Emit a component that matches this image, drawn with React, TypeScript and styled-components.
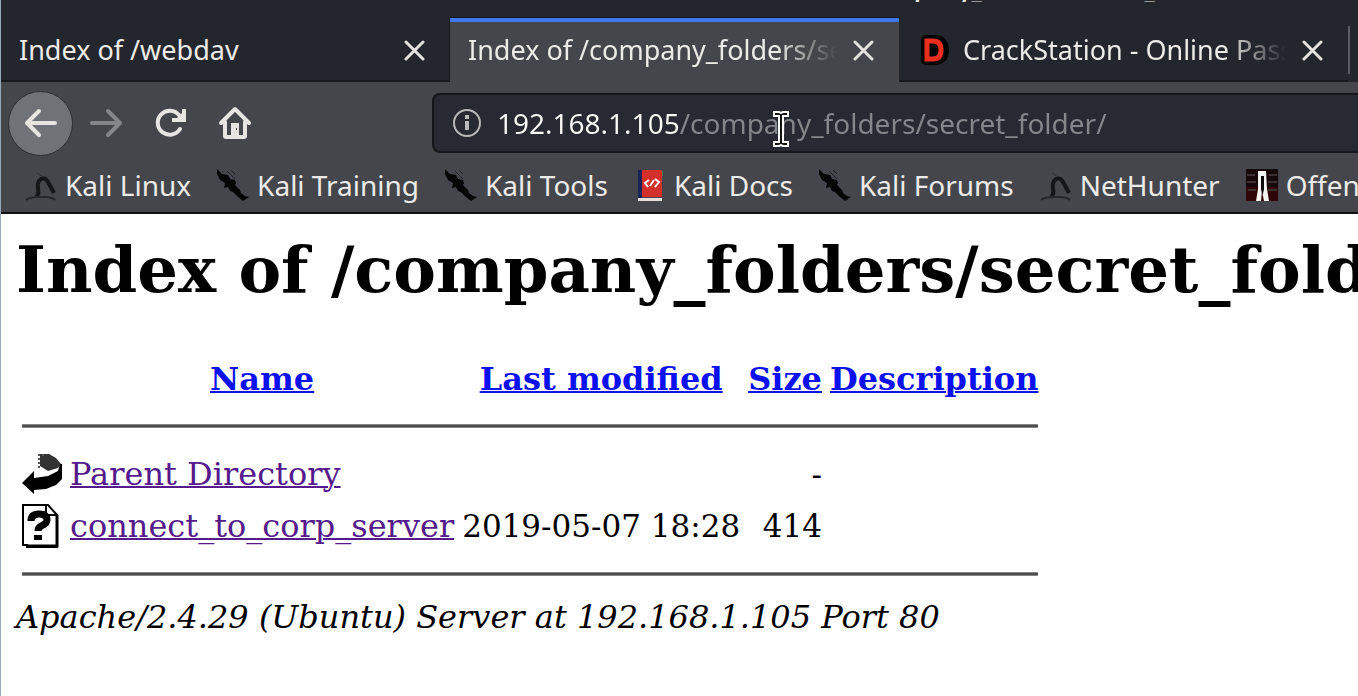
import React from "react";
import styled, { createGlobalStyle } from "styled-components";

const ui = '"Noto Sans", "Open Sans", sans-serif';
const serif = '"DejaVu Serif", serif';

const Global = createGlobalStyle`
  * { box-sizing: border-box; }
  body { margin: 0; background: #fff; overflow: hidden; }
`;
const Window = styled.div`
  min-height: 100vh;
  border-left: 1px solid #9aa9b8;
  overflow: hidden;
  font-family: ${ui};
  font-size: 28px;
  line-height: 40px;
  color: #ecebe8;
`;
const Chrome = styled.header`
  background: #44464c;
  border-bottom: 2px solid #111216;
  margin-left: -1px;
  border-left: 1px solid #2d4554;
`;
const TitleBar = styled.div`
  display: flex;
  align-items: flex-end;
  height: 2px;
  padding-left: 751px;
  overflow: hidden;
  background: #24262e;
  font-size: 24px;
  font-weight: 600;
  line-height: 24px;
  white-space: nowrap;
`;
const TabStrip = styled.div`
  display: flex;
  height: 80px;
  padding-top: 16px;
  background: #24262e;
  font-size: 27px;
  white-space: nowrap;
`;
const Tab = styled.div<{ $active?: boolean }>`
  flex: 0 0 449px;
  min-width: 0;
  display: flex;
  align-items: center;
  padding: 0 22px 2px 18px;
  background: ${(p) => (p.$active ? "#44464c" : "#24262e")};
  border-top: 4px solid ${(p) => (p.$active ? "#3f79f0" : "transparent")};
  border-bottom: 2px solid ${(p) => (p.$active ? "#44464c" : "#17181d")};
  box-shadow: ${(p) => (p.$active ? "0 0 0 1px #17181d" : "none")};
  clip-path: inset(-1px -1px 0 -1px);
`;
const TabTitle = styled.span<{ $fade?: boolean }>`
  flex: 1;
  min-width: 0;
  overflow: hidden;
  mask-image: ${(p) => (p.$fade ? "linear-gradient(to left, transparent 12px, #000 72px)" : "none")};
`;
const IconButton = styled.button<{ $size: number; $round?: boolean }>`
  flex: none;
  width: ${(p) => p.$size}px;
  height: ${(p) => p.$size}px;
  padding: 0;
  display: grid;
  place-items: center;
  border: ${(p) => (p.$round ? "1px solid #2e2f34" : "0")};
  border-radius: 50%;
  background: ${(p) => (p.$round ? "#717277" : "none")};
  color: #e6e5e2;
  &:disabled { color: #85868a; }
`;
const Favicon = styled.svg`
  flex: none;
  margin: 0 14px 0 4px;
`;
const Divider = styled.div`
  flex: none;
  width: 2px;
  margin: 8px 0;
  background: #5b5d63;
`;
const Toolbar = styled.div`
  display: flex;
  align-items: center;
  height: 82px;
  padding-left: 7px;
`;
const NavButtons = styled.nav`
  flex: 0 0 424px;
  display: flex;
  align-items: center;
`;
const UrlBar = styled.label`
  position: relative;
  flex: 1;
  min-width: 0;
  height: 60px;
  display: flex;
  align-items: center;
  gap: 16px;
  padding-left: 19px;
  background: #272933;
  border: 2px solid #15161b;
  border-right: 0;
  border-radius: 8px 0 0 8px;
`;
const UrlInput = styled.input`
  flex: 1;
  min-width: 0;
  height: 44px;
  padding: 0;
  border: 0;
  outline: 0;
  font: 28px/40px ${ui};
  color: transparent;
  background: linear-gradient(to right, #f8f8f8 182px, #85868b 182px);
  background-clip: text;
  -webkit-background-clip: text;
`;
const Pointer = styled.svg`
  position: absolute;
  left: 339px;
  top: 15px;
`;
const Bookmarks = styled.nav`
  display: flex;
  height: 48px;
  padding-left: 24px;
  white-space: nowrap;
`;
const Bookmark = styled.a`
  flex: none;
  display: flex;
  align-items: center;
  height: 42px;
  margin-right: 26px;
  gap: 8px;
  color: inherit;
  text-decoration: none;
`;
const Page = styled.main`
  padding: 18px 0 0 15px;
  font: 32px/38px ${serif};
  color: #000;
`;
const Heading = styled.h1`
  margin: 0;
  font-size: 64px;
  line-height: 76px;
  white-space: nowrap;
`;
const Listing = styled.table`
  margin-top: 44px;
  border-collapse: separate;
  border-spacing: 4px;
  th, td { padding: 2px; white-space: nowrap; }
  th { line-height: 42px; }
  svg { display: block; }
`;
const Num = styled.td`
  text-align: right;
  font-size: 31px;
`;
const Rule = styled.hr`
  height: 4px;
  margin: 16px 0;
  border: 1px solid #858585;
  border-width: 1px 0;
  background: #4e4e4e;
`;
const Link = styled.a<{ $visited?: boolean }>`
  color: ${(p) => (p.$visited ? "#551a8b" : "#0a10ee")};
  text-decoration-thickness: 2px;
`;
const Address = styled.address`
  white-space: nowrap;
`;

const CloseIcon = () => (
  <svg width="22" height="22" viewBox="0 0 22 22" fill="none" stroke="#e4e3df" strokeWidth="3" strokeLinecap="round">
    <path d="M3 3l17 17M20 3L3 20" />
  </svg>
);
const Arrow = ({ flip }: { flip?: boolean }) => (
  <svg width="34" height="32" viewBox="0 0 34 32" fill="none" stroke="currentColor" strokeWidth="4" strokeLinecap="round" strokeLinejoin="round">
    <path d={flip ? "M3 16h28M19 4l12 12-12 12" : "M31 16H3M15 4L3 16l12 12"} />
  </svg>
);
const Dragon = () => (
  <svg width="32" height="32" viewBox="0 0 32 32" aria-hidden="true">
    <path d="M12 4l6 4" stroke="#303238" strokeWidth="1" />
    <path d="M11 28c6-5-1-10 3-16 3-4 7-3 9 1l6 11" fill="none" stroke="#15161a" strokeWidth="4" />
    <path d="M1 31q4-3 12-3h9q6 1 8 3" fill="none" stroke="#26272c" strokeWidth="2" />
  </svg>
);
const Blade = () => (
  <svg width="32" height="32" viewBox="0 0 32 32" aria-hidden="true">
    <path d="M0 0l5 5 6 1 2 4 5 1 1 3-1 2 5 5 1 3 4 3 4 1-6 4-5-4-5-5-3-1-2-4-4 1 1-5-5-3-2-4-1-2z" fill="#050506" />
    <path d="M10 2l8 8M14 1l4 4" stroke="#222429" strokeWidth="1" />
  </svg>
);
const Docs = () => (
  <svg width="32" height="32" viewBox="0 0 32 32" aria-hidden="true">
    <path d="M4 1h4v28H4z" fill="#1b2458" />
    <path d="M8 1h20v27H8z" fill="#d3302b" />
    <path d="M28 2h1v5h-1z" fill="#3f8044" />
    <path d="M4 29h24v3H4z" fill="#e8dedd" />
    <path d="M15 11l-4 3 3 4M21 10l4 3-4 5M16 17l4-6" fill="none" stroke="#fff" strokeWidth="2" />
  </svg>
);
const Offensive = () => (
  <svg width="32" height="32" viewBox="0 0 32 32" aria-hidden="true">
    <path d="M0 0h32v32H0z" fill="#160708" />
    <path d="M0 18h32v14H0z" fill="#300507" />
    <path d="M1 6h8M23 6h8M1 13h9M22 13h9M2 21h8M22 21h9" stroke="#3c3032" strokeWidth="2" />
    <path d="M12 2h8l1 18 2 12h-5l-2-10-1 10h-5l2-12z" fill="#f7f5f4" />
    <path d="M15 7h3v13l-1 5h-1l-1-5z" fill="#0e0c0d" />
  </svg>
);

const bookmarks: [string, () => React.ReactElement][] = [
  ["Kali Linux", Dragon],
  ["Kali Training", Blade],
  ["Kali Tools", Blade],
  ["Kali Docs", Docs],
  ["Kali Forums", Blade],
  ["NetHunter", Dragon],
  ["Offensive Security", Offensive],
];

export default function App() {
  return (
    <Window>
      <Global />
      <Chrome>
        <TitleBar>Index of /company_folders/secret_folder - Mozilla Firefox</TitleBar>
        <TabStrip>
          <Tab>
            <TabTitle>Index of /webdav</TabTitle>
            <IconButton $size={28} aria-label="Close tab"><CloseIcon /></IconButton>
          </Tab>
          <Tab $active>
            <TabTitle $fade>Index of /company_folders/secret_folder</TabTitle>
            <IconButton $size={28} aria-label="Close tab"><CloseIcon /></IconButton>
          </Tab>
          <Tab>
            <Favicon width="28" height="32" viewBox="0 0 28 32" aria-hidden="true">
              <path d="M5 6h9q9 0 9 10t-9 10H5z" fill="none" stroke="#050505" strokeWidth="10" strokeLinejoin="round" />
              <path d="M6 7h6q8 0 8 9t-8 9H6z" fill="#050505" stroke="#e92e20" strokeWidth="5" />
            </Favicon>
            <TabTitle $fade>CrackStation - Online Password Hash Cracking</TabTitle>
            <IconButton $size={28} aria-label="Close tab"><CloseIcon /></IconButton>
          </Tab>
          <Divider />
        </TabStrip>
        <Toolbar>
          <NavButtons>
            <IconButton $size={65} $round aria-label="Back"><Arrow /></IconButton>
            <IconButton $size={66} disabled aria-label="Forward"><Arrow flip /></IconButton>
            <IconButton $size={64} aria-label="Reload">
              <svg width="32" height="32" viewBox="0 0 32 32" fill="none" stroke="currentColor" strokeWidth="4">
                <path d="M25 22A12 12 0 1 1 24 8" strokeLinecap="round" />
                <path d="M29 2v11H17" />
                <path d="M29 4v9h-9z" fill="currentColor" stroke="none" />
              </svg>
            </IconButton>
            <IconButton $size={64} aria-label="Home">
              <svg width="34" height="34" viewBox="0 0 34 34" fill="none" stroke="currentColor" strokeWidth="4" strokeLinecap="round" strokeLinejoin="round">
                <path d="M3 17L17 3l14 14M7 16v14q0 1 1 1h18q1 0 1-1V16" />
                <path d="M13 17h8v14h-8z" fill="currentColor" stroke="none" />
                <path d="M18 22h1v2h-1z" fill="#44464c" stroke="none" />
              </svg>
            </IconButton>
          </NavButtons>
          <UrlBar>
            <svg width="28" height="28" viewBox="0 0 28 28" fill="none" stroke="#b9b9bb" aria-hidden="true">
              <circle cx="14" cy="14" r="13" strokeWidth="2" />
              <path d="M14 6v4M14 12v9" strokeWidth="4" />
            </svg>
            <UrlInput aria-label="Address" defaultValue="192.168.1.105/company_folders/secret_folder/" />
            <Pointer width="16" height="38" viewBox="0 0 16 38" aria-hidden="true">
              <path d="M1 2h5l2 1 2-1h5v4h-5v26h5v4h-5l-2-1-2 1H1v-4h5V6H1z" fill="#111" stroke="#fff" strokeWidth="2" />
            </Pointer>
          </UrlBar>
        </Toolbar>
        <Bookmarks>
          {bookmarks.map(([label, Icon]) => (
            <Bookmark href="#" key={label}><Icon />{label}</Bookmark>
          ))}
        </Bookmarks>
      </Chrome>
      <Page>
        <Heading>Index of /company_folders/secret_folder</Heading>
        <Listing>
          <thead>
            <tr>
              <th />
              <th><Link href="#">Name</Link></th>
              <th><Link href="#">Last modified</Link></th>
              <th><Link href="#">Size</Link></th>
              <th><Link href="#">Description</Link></th>
            </tr>
            <tr><th colSpan={5}><Rule /></th></tr>
          </thead>
          <tbody>
            <tr>
              <td>
                <svg width="40" height="44" viewBox="0 0 40 44" role="img" aria-label="Parent">
                  <path d="M18 2h9l7 4 5 6-3 4-10 3-8-5z" fill="#333" />
                  <path d="M17 2v14M21 2v2" stroke="#555" strokeWidth="2" strokeDasharray="2 2" />
                  <path d="M40 12v15l-6 6-10 4-12 1v4L0 31l12-12v7l14-2 10-5 2-7z" fill="#000" />
                </svg>
              </td>
              <td><Link $visited href="#">Parent Directory</Link></td>
              <td />
              <Num>-</Num>
              <td />
            </tr>
            <tr>
              <td>
                <svg width="40" height="44" viewBox="0 0 40 44" role="img" aria-label="Unknown file">
                  <path d="M1 1h25l9 10v32H5v-2H1z" fill="#fff" stroke="#000" strokeWidth="2" />
                  <path d="M35 11v31H5" fill="none" stroke="#000" strokeWidth="3" />
                  <path d="M24 1v10h11" fill="none" stroke="#000" strokeWidth="2" />
                  <path d="M9 17q0-7 8-7 8 0 8 6 0 3-4 5-5 2-5 6" fill="none" stroke="#000" strokeWidth="7" />
                  <path d="M12 31h8v5h-8z" fill="#000" />
                </svg>
              </td>
              <td><Link $visited href="#">connect_to_corp_server</Link></td>
              <Num>2019-05-07 18:28</Num>
              <Num>414</Num>
              <td />
            </tr>
            <tr><td colSpan={5}><Rule /></td></tr>
          </tbody>
        </Listing>
        <Address>Apache/2.4.29 (Ubuntu) Server at 192.168.1.105 Port 80</Address>
      </Page>
    </Window>
  );
}
